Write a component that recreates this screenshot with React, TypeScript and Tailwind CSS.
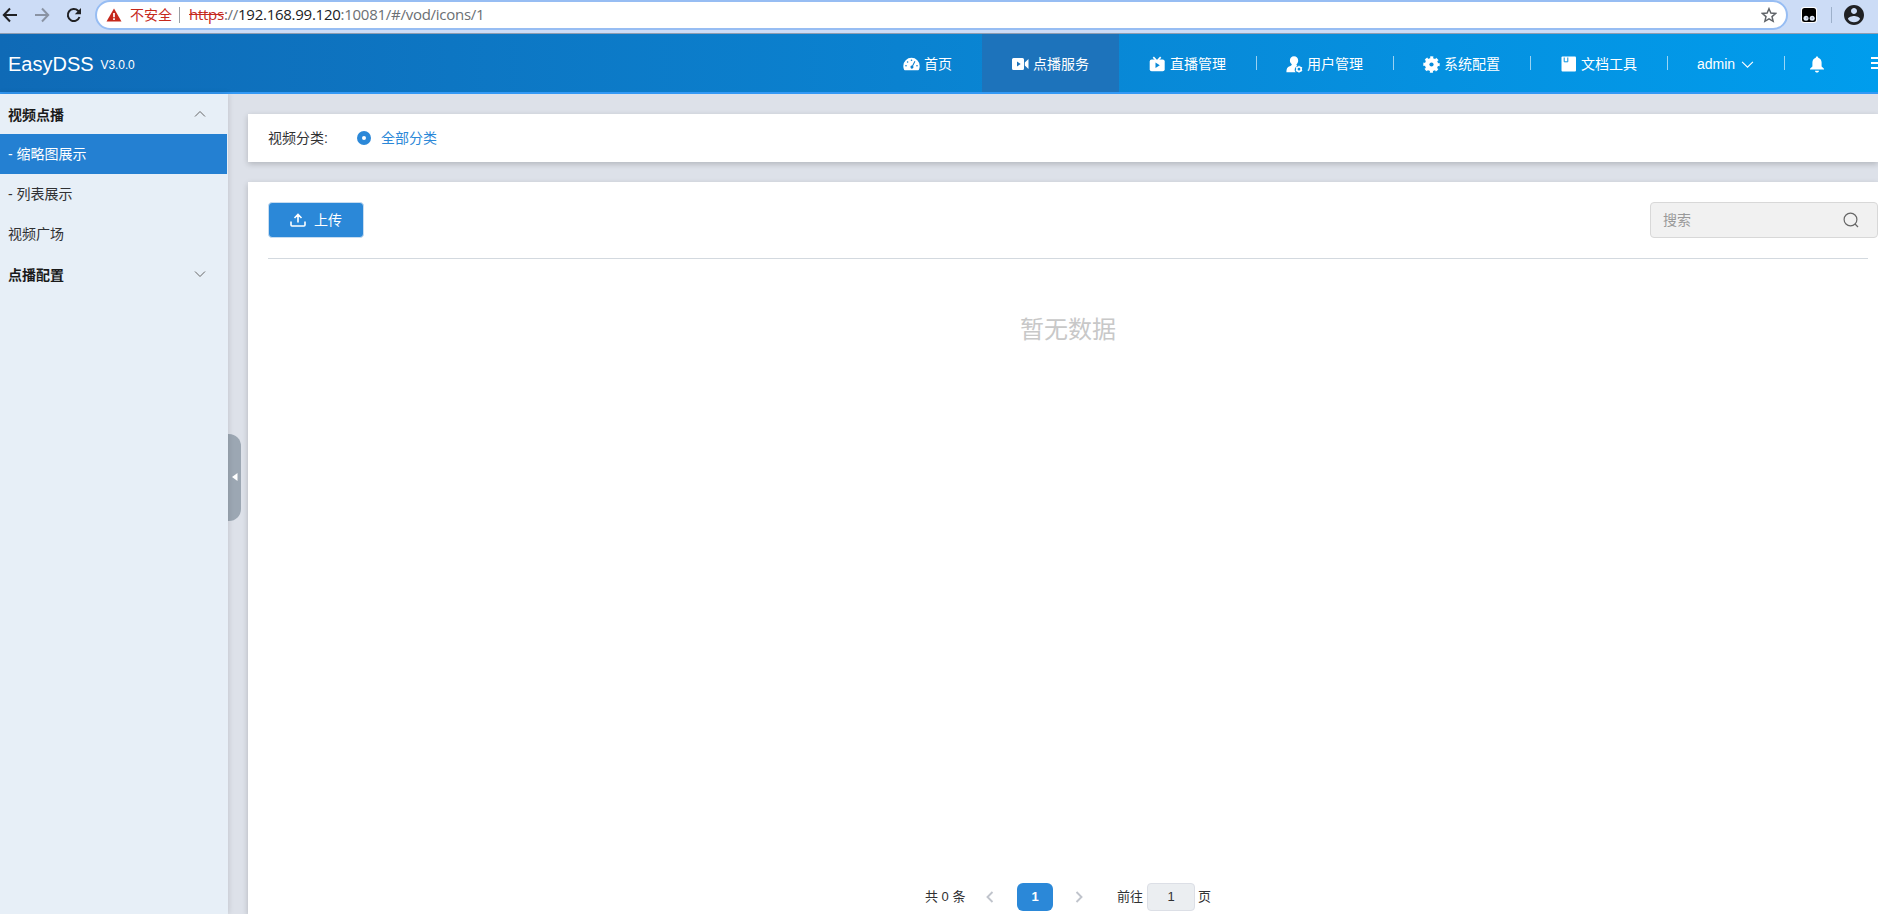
import React from "react";

const HomeIcon = () => (
  <svg width="17" height="14" viewBox="0 0 17 14" className="shrink-0">
    <path d="M8.500.8A8.200 8.200 0 0 0 .3 9c0 1.300.3 2.600.8 3.800q.2.400.7.400h13.400q.5 0 .7-.4c.5-1.200.8-2.500.8-3.800A8.200 8.200 0 0 0 8.500.8z" fill="#fff" />
    <g fill="#0a80cf">
      <circle cx="8.500" cy="3.300" r=".8" />
      <circle cx="4.600" cy="5" r=".8" />
      <circle cx="3" cy="8.700" r=".8" />
      <circle cx="14" cy="8.700" r=".8" />
      <path d="M11.500 4l.9.500-2.300 4.600a1.500 1.500 0 1 1-.9-.5z" />
    </g>
  </svg>
);

const VideoIcon = () => (
  <svg width="17" height="14" viewBox="0 0 17 14" className="shrink-0">
    <path d="M1.500 1h9A1.500 1.500 0 0 1 12 2.500v9a1.500 1.500 0 0 1-1.500 1.500h-9A1.500 1.500 0 0 1 0 11.500v-9A1.500 1.500 0 0 1 1.500 1zM12.800 5.500L16.500 2v10l-3.700-3.500z" fill="#fff" />
    <path d="M5 4.600v4.800L8.700 7z" fill="#1d73bb" />
  </svg>
);

const LiveIcon = () => (
  <svg width="17" height="16" viewBox="0 0 17 16" className="shrink-0">
    <path d="M4.300 1.200L7 4M11.700 1.200L9 4" stroke="#fff" strokeWidth="1.700" />
    <rect x=".7" y="3.500" width="15" height="11.800" rx="2" fill="#fff" />
    <path d="M6.500 6.500v5.400l4.300-2.700z" fill="#0788d8" />
  </svg>
);

const UserIcon = () => (
  <svg width="17" height="17" viewBox="0 0 17 17" className="shrink-0">
    <path d="M8 .3c2.500 0 4.200 1.700 4.200 4.300 0 1.700-.8 3.200-1.800 4 .1.600.5 1 1 1.300A3.900 3.900 0 0 0 9.700 16.300H.4c0-3.600.8-5 3.200-6 1.200-.5 2.100-.9 2.200-2-1-.8-1.900-2.100-1.900-3.800C3.900 2 5.500.3 8 .3z" fill="#fff" />
    <circle cx="13" cy="13.200" r="2.200" fill="none" stroke="#fff" strokeWidth="1.600" />
    <path d="M13 9.800v1M13 15.600v1M9.900 11.500l1 .6M15.100 14.300l1 .6M9.900 14.900l1-.6M15.100 12.100l1-.6" stroke="#fff" strokeWidth="1.200" />
  </svg>
);

const GearIcon = () => (
  <svg width="17" height="17" viewBox="0 0 17 17" className="shrink-0">
    <circle cx="8.500" cy="8.500" r="6.600" fill="#fff" />
    <circle cx="8.500" cy="8.500" r="6.900" fill="none" stroke="#fff" strokeWidth="2.600" strokeDasharray="3 2.419" strokeDashoffset="1.500" />
    <circle cx="8.500" cy="8.500" r="2.100" fill="#058cdc" />
  </svg>
);

const DocIcon = () => (
  <svg width="16" height="16" viewBox="0 0 16 16" className="shrink-0">
    <rect x=".5" y=".5" width="14.500" height="15" rx="1" fill="#fff" />
    <path d="M3.200 1.500v4.300h3.600V1.500" fill="none" stroke="#0592e1" strokeWidth="1" />
  </svg>
);

const Chevron = ({ d, size, color, width = 1 }: { d: string; size: number; color: string; width?: number }) => (
  <svg width={size} height={size} viewBox="0 0 12 12" fill="none" stroke={color} strokeWidth={width} className="shrink-0">
    <path d={d} />
  </svg>
);

const UP = "M1 8.500L6 3.500l5 5";
const DOWN = "M1 3.500l5 5 5-5";

const navItems = [
  { label: "首页", icon: <HomeIcon />, active: false, divider: false },
  { label: "点播服务", icon: <VideoIcon />, active: true, divider: false },
  { label: "直播管理", icon: <LiveIcon />, active: false, divider: true },
  { label: "用户管理", icon: <UserIcon />, active: false, divider: true },
  { label: "系统配置", icon: <GearIcon />, active: false, divider: true },
  { label: "文档工具", icon: <DocIcon />, active: false, divider: true },
];

function BrowserBar() {
  return (
    <div className="flex h-[34px] shrink-0 items-start border-b border-[#8f9db2] bg-[#ccdcf6]">
      <svg width="95" height="30" viewBox="0 0 95 30" fill="none" strokeWidth="2" className="shrink-0">
        <path d="M17 15H4M10 8.500L3.800 15l6.200 6.500" stroke="#202124" />
        <path d="M35 15h13M42 8.500l6.200 6.500-6.200 6.500" stroke="#8a93a3" />
        <path d="M79.500 17a6 6 0 1 1-1.400-6.200l2 2" stroke="#202124" />
        <path d="M81 8v6.200h-6.200z" fill="#202124" />
      </svg>
      <div className="flex h-[30px] w-[1693px] shrink-0 items-center rounded-full border-2 border-[#97bdf3] bg-white pr-[9px] pl-[9px] font-['Open_Sans','Noto_Sans_CJK_SC',sans-serif] text-[14px]">
        <svg width="16" height="14" viewBox="0 0 16 14" className="shrink-0">
          <path d="M8 .5L15.500 13.500H.5z" fill="#c5281c" />
          <path d="M8 5v4.200M8 10.300v1.800" stroke="#fff" strokeWidth="1.700" />
        </svg>
        <span className="mb-px ml-[8px] w-[42px] whitespace-nowrap text-[#c5281c]">不安全</span>
        <span className="ml-[7px] h-4 w-px bg-[#9aa0a6]" />
        <span className="mb-[2px] ml-[9px] whitespace-nowrap text-[15px] tracking-[-0.265px] text-[#6b6f73]">
          <span className="text-[#c5281c] line-through">https</span>://<span className="text-[#202124]">192.168.99.120</span>:10081/#/vod/icons/1
        </span>
        <svg width="16" height="16" viewBox="0 0 24 24" fill="none" stroke="#5f6368" strokeWidth="2.200" className="ml-auto shrink-0">
          <path d="M12 2.500l2.800 6.600 7.200.6-5.500 4.700 1.700 7-6.200-3.700-6.200 3.700 1.700-7L2 9.700l7.200-.6z" />
        </svg>
      </div>
      <div className="flex h-[30px] items-center">
        <svg width="16" height="16" viewBox="0 0 16 16" className="ml-[13px]">
          <rect width="16" height="16" rx="3" fill="#fff" />
          <rect x="1" y="1" width="14" height="14" rx="2.500" fill="#000" />
          <circle cx="5" cy="11.200" r="2.500" fill="#dfe8f5" />
          <circle cx="11.200" cy="11.200" r="2.500" fill="#dfe8f5" />
          <path d="M5 11h1.500M10.500 11H12" stroke="#88a" strokeWidth="1" />
        </svg>
        <span className="ml-[14px] h-4 w-px bg-[#9db0ca]" />
        <svg width="20" height="20" viewBox="2 2 20 20" className="ml-[12px]">
          <path fill="#202124" d="M12 2C6.480 2 2 6.480 2 12s4.480 10 10 10 10-4.480 10-10S17.520 2 12 2zm0 3c1.660 0 3 1.340 3 3s-1.340 3-3 3-3-1.340-3-3 1.340-3 3-3zm0 14.200a7.200 7.200 0 0 1-6-3.220c.03-1.990 4-3.080 6-3.080 1.990 0 5.970 1.090 6 3.080a7.200 7.200 0 0 1-6 3.220z" />
        </svg>
      </div>
    </div>
  );
}

function Header() {
  return (
    <header className="flex h-[60px] shrink-0 overflow-hidden border-b-2 border-[#3399f5] bg-linear-to-r from-[#0f6ab6] to-[#009ded] text-white">
      <div className="flex w-[873px] shrink-0 items-center pt-[2px] pl-[8px] leading-none">
        <span className="text-[20px]">EasyDSS</span>
        <span className="mt-px ml-[7px] text-[12px] tracking-[-0.1px]">V3.0.0</span>
      </div>
      {navItems.map((item) => (
        <div key={item.label} className={item.active ? "flex h-full shrink-0 items-center bg-[#1d73bb] pt-[2px]" : "flex h-full shrink-0 items-center pt-[2px]"}>
          <div className={item.label.length === 2 ? "flex w-[109px] items-center gap-1 pl-[30px]" : "flex w-[136px] items-center gap-1 pl-[30px]"}>
            <span className="flex w-[17px] justify-center">{item.icon}</span>
            <span className="whitespace-nowrap">{item.label}</span>
          </div>
          {item.label.length > 2 && <span className={item.divider ? "mb-[2px] h-[14px] w-px translate-x-px bg-white/60" : "h-[14px] w-px"} />}
        </div>
      ))}
      <div className="flex shrink-0 items-center pt-[2px]">
        <div className="flex w-[117px] items-center pl-[30px]">
          <span>admin</span>
          <span className="ml-[6px]"><Chevron d={DOWN} size={13} color="#fff" /></span>
        </div>
        <span className="mb-[2px] h-[14px] w-px bg-white/60" />
        <svg width="16" height="17" viewBox="0 0 16 17" className="ml-[24px] shrink-0">
          <path fill="#fff" d="M8 .5c.8 0 1.200.5 1.200 1.200 2.200.6 3.400 2.500 3.400 4.800v4L15 12.700v.9H1v-.9l2.400-2.200v-4c0-2.300 1.200-4.200 3.400-4.800C6.800 1 7.200.5 8 .5zM6 14.700h4c0 1-.8 1.800-2 1.800s-2-.8-2-1.800z" />
        </svg>
        <svg width="16" height="14" viewBox="0 0 16 14" className="mb-[3px] ml-[46px] shrink-0">
          <path d="M0 2h16M0 7h16M0 12h16" stroke="#fff" strokeWidth="2" />
        </svg>
      </div>
    </header>
  );
}

function Sidebar() {
  return (
    <aside className="z-10 flex w-[228px] shrink-0 flex-col bg-[#e7eff7] text-[#303133] shadow-[0_0_6px_rgba(0,0,0,0.15)]">
      <div className="flex h-10 items-center justify-between pt-[2px] pr-[22px] pl-2 font-bold text-[#1a1a1a]">
        视频点播
        <span className="pb-[2px]"><Chevron d={UP} size={12} color="#666" /></span>
      </div>
      <div className="mr-px flex h-10 items-center bg-[#2480d2] pl-2 text-white">- 缩略图展示</div>
      <div className="flex h-10 items-center pl-2">- 列表展示</div>
      <div className="flex h-10 items-center pl-2">视频广场</div>
      <div className="flex h-10 items-center justify-between pt-[2px] pr-[22px] pl-2 font-bold text-[#1a1a1a]">
        点播配置
        <span className="pb-[2px]"><Chevron d={DOWN} size={12} color="#666" /></span>
      </div>
    </aside>
  );
}

function Pagination() {
  return (
    <div className="mt-auto mb-[3px] ml-[657px] flex h-7 items-center text-[13px] text-[#303133]">
      <span className="w-[41px] whitespace-nowrap">共 0 条</span>
      <span className="ml-[18px]"><Chevron d="M8.500 1l-5 5 5 5" size={12} color="#c0c4cc" width={1.900} /></span>
      <span className="ml-[21px] flex h-7 w-9 items-center justify-center rounded-md bg-[#2b88d8] font-bold text-white">1</span>
      <span className="ml-[20px]"><Chevron d="M3.500 1l5 5-5 5" size={12} color="#c0c4cc" width={1.900} /></span>
      <span className="ml-[32px] w-[26px] whitespace-nowrap">前往</span>
      <span className="ml-[4px] flex h-7 w-12 items-center justify-center rounded border border-[#dcdfe6] bg-[#ebeef1]">1</span>
      <span className="ml-[3px]">页</span>
    </div>
  );
}

export default function App() {
  return (
    <div className="flex h-[914px] w-[1878px] flex-col overflow-hidden bg-[#dde1e9] font-['Liberation_Sans','Noto_Sans_CJK_SC',sans-serif] text-[14px]">
      <BrowserBar />
      <Header />
      <div className="flex min-h-0 flex-1">
        <Sidebar />
        <div className="flex w-5 shrink-0 flex-col">
          <div className="mt-[340px] flex h-[87px] w-[13px] items-center rounded-r-[12px] bg-[#9ca7b3] pb-px pl-[4px]">
            <svg width="6" height="8" viewBox="0 0 6 8"><path d="M0 4L5.500 0v8z" fill="#fff" /></svg>
          </div>
        </div>
        <main className="flex min-w-0 flex-1 flex-col pt-5">
          <section className="flex h-12 shrink-0 items-center bg-white pl-5 text-[#303133] shadow-[0_2px_6px_rgba(0,0,0,0.2)]">
            <span className="w-[60px] whitespace-nowrap">视频分类:</span>
            <span className="ml-[29px] flex h-[14px] w-[14px] items-center justify-center rounded-full bg-[#2b88d8]">
              <span className="h-1 w-1 rounded-full bg-white" />
            </span>
            <span className="ml-[10px] text-[#2b88d8]">全部分类</span>
          </section>
          <section className="mt-5 flex min-h-0 flex-1 flex-col bg-white pl-5 pt-5 shadow-[0_2px_6px_rgba(0,0,0,0.2)]">
            <div className="flex h-9 shrink-0 justify-between">
              <div className="flex h-9 w-[96px] items-center justify-center rounded-[4px] border border-[#c7dcf0] bg-[#2b88d8] text-white">
                <svg width="16" height="14" viewBox="0 0 16 14" fill="none" stroke="#fff" strokeWidth="1.600">
                  <path d="M1 8.500V12q0 1 1 1h12q1 0 1-1V8.500M8 9.500V1.500M4.500 5L8 1.500 11.500 5" />
                </svg>
                <span className="ml-[8px]">上传</span>
              </div>
              <div className="flex h-9 w-[228px] items-center justify-between rounded border border-[#d8d8d8] bg-[#f1f1f1] pr-[18px] pl-[12px] text-[#999]">
                搜索
                <svg width="16" height="16" viewBox="0 0 16 16" fill="none" stroke="#666" strokeWidth="1.200">
                  <circle cx="7.500" cy="7.500" r="6.400" />
                  <path d="M12 12l3 3" />
                </svg>
              </div>
            </div>
            <div className="mt-5 mr-[10px] h-px shrink-0 bg-[#d3d9df]" />
            <div className="mt-[53px] mr-[10px] text-center text-[24px] leading-9 text-[#c8c8c8]">暂无数据</div>
            <Pagination />
          </section>
        </main>
      </div>
    </div>
  );
}
